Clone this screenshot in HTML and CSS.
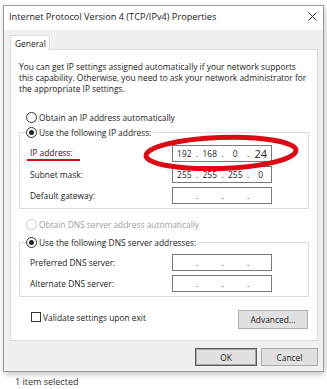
FILE: index.html
```html
<!DOCTYPE html>
<html lang="en">

<head>
    <meta charset="UTF-8">
    <meta name="viewport" content="width=device-width, initial-scale=1.0">
    <title>IPv4 Properties</title>
    <link rel="stylesheet" href="styles.css">
</head>

<body>

    <div class="desk">
        <div class="window">
            <div class="titlebar">
                <span class="title">Internet Protocol Version 4 (TCP/IPv4) Properties</span>
                <svg class="close" width="9" height="9" viewBox="0 0 9 9">
                    <path d="M0.5 0.5 L8.5 8.5 M8.5 0.5 L0.5 8.5" stroke="#333" stroke-width="1" fill="none" />
                </svg>
            </div>

            <div class="content">
                <div class="tab">General</div>

                <div class="panel">
                    <p class="intro">You can get IP settings assigned automatically if your network supports
                        this capability. Otherwise, you need to ask your network administrator
                        for the appropriate IP settings.</p>

                    <div class="radio first"><span class="dot"></span>Obtain an IP address automatically</div>

                    <fieldset class="group ipgroup">
                        <legend class="radio"><span class="dot on"></span>Use the following IP address:</legend>

                        <div class="row">
                            <span class="label"><span class="mark">IP address:</span></span>
                            <div class="field">
                                <div class="ipbox">
                                    <span class="seg">192</span><span class="sep">.</span>
                                    <span class="seg">168</span><span class="sep">.</span>
                                    <span class="seg">0</span><span class="sep">.</span>
                                    <span class="seg big">24</span>
                                </div>
                                <!-- red marker ring drawn over the field -->
                                <svg class="ring" width="160" height="40" viewBox="0 0 160 40">
                                    <ellipse cx="80" cy="20" rx="75" ry="15.5" fill="none" stroke="#dc0a14" stroke-width="5" transform="rotate(-2 80 20)" />
                                </svg>
                            </div>
                        </div>
                        <div class="row">
                            <span class="label">Subnet mask:</span>
                            <div class="ipbox">
                                <span class="seg">255</span><span class="sep">.</span>
                                <span class="seg">255</span><span class="sep">.</span>
                                <span class="seg">255</span><span class="sep">.</span>
                                <span class="seg">0</span>
                            </div>
                        </div>
                        <div class="row">
                            <span class="label">Default gateway:</span>
                            <div class="ipbox">
                                <span class="seg"></span><span class="sep">.</span>
                                <span class="seg"></span><span class="sep">.</span>
                                <span class="seg"></span><span class="sep">.</span>
                                <span class="seg"></span>
                            </div>
                        </div>
                    </fieldset>

                    <div class="radio dns-auto disabled"><span class="dot"></span>Obtain DNS server address automatically</div>

                    <fieldset class="group dnsgroup">
                        <legend class="radio"><span class="dot on"></span>Use the following DNS server addresses:</legend>

                        <div class="row">
                            <span class="label">Preferred DNS server:</span>
                            <div class="ipbox">
                                <span class="seg"></span><span class="sep">.</span>
                                <span class="seg"></span><span class="sep">.</span>
                                <span class="seg"></span><span class="sep">.</span>
                                <span class="seg"></span>
                            </div>
                        </div>
                        <div class="row">
                            <span class="label">Alternate DNS server:</span>
                            <div class="ipbox">
                                <span class="seg"></span><span class="sep">.</span>
                                <span class="seg"></span><span class="sep">.</span>
                                <span class="seg"></span><span class="sep">.</span>
                                <span class="seg"></span>
                            </div>
                        </div>
                    </fieldset>

                    <div class="options">
                        <label class="check"><span class="box"></span>Validate settings upon exit</label>
                        <button class="btn advanced">Advanced...</button>
                    </div>
                </div>

                <div class="actions">
                    <button class="btn ok">OK</button>
                    <button class="btn cancel">Cancel</button>
                </div>
            </div>
        </div>

        <div class="status">1 item selected</div>
    </div>

</body>

</html>
```

FILE: styles.css
```css
body {
    margin: 0;
    background-color: #fff;
    color: #222;
    font-family: "Open Sans", "Noto Sans", sans-serif;
    font-size: 8.4px;
}

.desk {
    height: 389px;
    padding: 5px 0 0 3px;
    box-sizing: border-box;
    overflow: hidden;
}

.window {
    width: 321px;
    height: 367px;
    box-sizing: border-box;
    border: 1px solid #9c9c9c;
    background-color: #f0f0f0;
    box-shadow: 1px 2px 6px rgba(0, 0, 0, 0.25);
    display: flex;
    flex-direction: column;
}

.titlebar {
    height: 24px;
    box-sizing: border-box;
    background-color: #fff;
    padding: 5px 6px 0 5px;
    display: flex;
    justify-content: space-between;
    align-items: flex-start;
}

.title {
    font-size: 9.2px;
    line-height: 11px;
    color: #1a1a1a;
}

.close {
    margin-top: 1px;
}

.content {
    padding: 5px 5px 0 6px;
}

.tab {
    width: 40px;
    height: 15px;
    padding-left: 4px;
    box-sizing: border-box;
    line-height: 15px;
    border: 1px solid #d9d9d9;
    border-bottom: none;
    background-color: #fff;
    position: relative; /* 蓋住 panel 上框 */
    margin-bottom: -1px;
}

.panel {
    height: 292px;
    box-sizing: border-box;
    border: 1px solid #d9d9d9;
    background-color: #fff;
    padding: 11px 9px 0 8px;
}

.intro {
    margin: 0;
    line-height: 11px;
}

.radio {
    display: flex;
    align-items: center;
    gap: 2px;
    height: 13px;
    line-height: 13px;
}

.dot {
    width: 11px;
    height: 11px;
    box-sizing: border-box;
    border: 1px solid #333;
    border-radius: 50%;
    background-color: #fff;
    display: flex;
    align-items: center;
    justify-content: center;
}

.dot.on::after {
    content: "";
    width: 5px;
    height: 5px;
    border-radius: 50%;
    background-color: #222;
}

.radio.first {
    margin: 17px 0 0 7px;
}

.radio.disabled {
    color: #a0a0a0;
}

.radio.disabled .dot {
    border-color: #c6c6c6;
}

.dns-auto {
    margin: 9px 0 0 7px;
}

.group {
    width: 290px;
    box-sizing: border-box;
    min-width: 0;
    margin: 0;
    border: 1px solid #dcdcdc;
    padding: 6px 6px 4px 6px;
}

.group legend {
    padding: 0 2px 0 0;
}

.ipgroup {
    margin-top: 2px;
}

.dnsgroup {
    margin-top: 5px;
    padding-top: 5px;
}

.row {
    display: flex;
    align-items: center;
    height: 17px;
}

.row + .row {
    margin-top: 4px;
}

.label {
    width: 146px;
    padding-left: 4px;
    box-sizing: border-box;
}

.mark {
    display: inline-block;
    margin-left: -3px;
    padding: 0 7px 1px 3px;
    line-height: 11px;
    border-bottom: 2px solid #dc0a14;
}

.field {
    position: relative;
}

.ring {
    position: absolute;
    left: -31px;
    top: -12px;
    pointer-events: none;
}

.ipbox {
    width: 100px;
    height: 17px;
    box-sizing: border-box;
    border: 1px solid #7a7a7a;
    padding-left: 1px;
    display: flex;
    align-items: center;
    background-color: #fff;
}

.seg {
    width: 21px;
    text-align: center;
}

.seg.big {
    font-size: 11px;
}

.sep {
    width: 5px;
    text-align: center;
}

.options {
    margin-top: 13px;
    display: flex;
    justify-content: space-between;
    align-items: flex-start;
    width: 290px;
}

.check {
    display: flex;
    align-items: center;
    gap: 2px;
    margin: 2px 0 0 12px;
    height: 10px;
}

.box {
    width: 10px;
    height: 10px;
    box-sizing: border-box;
    border: 1px solid #333;
    background-color: #fff;
}

.btn {
    height: 19px;
    box-sizing: border-box;
    border: 1px solid #adadad;
    background-color: #e1e1e1;
    font-family: inherit;
    font-size: 8.4px;
    color: #222;
    padding: 0;
}

.advanced {
    width: 70px;
    margin-right: 1px;
}

.actions {
    margin-top: 7px;
    display: flex;
    justify-content: flex-end;
    gap: 4px;
}

.ok {
    width: 62px;
    height: 18px;
    border-color: #5c5c5c;
    box-shadow: inset 0 0 0 1px #a8a8a8;
}

.cancel {
    width: 57px;
    height: 18px;
}

.status {
    margin: 4px 0 0 12px;
    line-height: 11px;
    font-size: 9px;
    color: #333;
}
```
